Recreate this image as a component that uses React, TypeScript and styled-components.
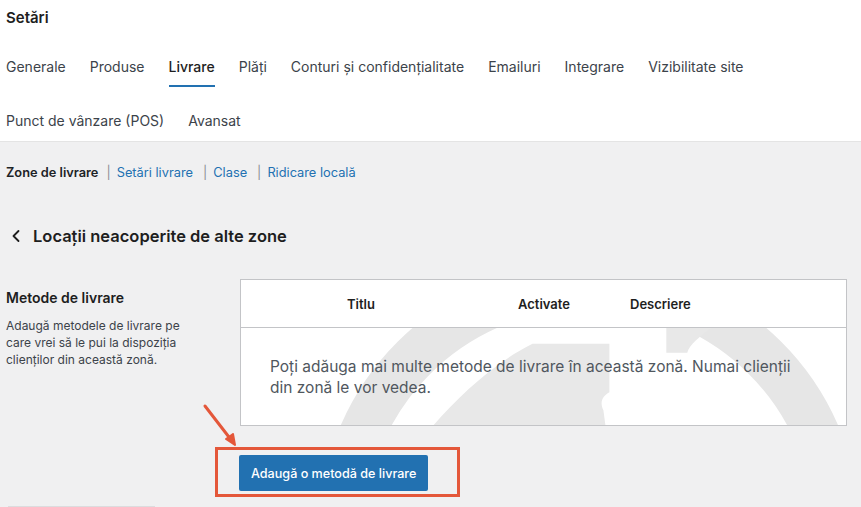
import styled, { createGlobalStyle } from 'styled-components';
import { ChevronLeft } from 'lucide-react';

const tabs = [
  'Generale',
  'Produse',
  'Livrare',
  'Plăți',
  'Conturi și confidențialitate',
  'Emailuri',
  'Integrare',
  'Vizibilitate site',
  'Punct de vânzare (POS)',
  'Avansat',
];

const subLinks = ['Setări livrare', 'Clase', 'Ridicare locală'];

const Globe = () =>
  <Watermark viewBox="241 327 606 98" preserveAspectRatio="none">
    <circle cx="590" cy="532" r="248" fill="none" stroke="#e6e6e6" strokeWidth="46" />
    <path
      d="M434 425 C460 395 495 362 533 343 L610 343 L610 392 C603 396 600 402 604 410 L606 425 Z"
      fill="#e8e8e8"
    />
    <path d="M667 327 L712 327 C700 336 690 344 688 352 L667 352 Z" fill="#e8e8e8" />
  </Watermark>;

const App: React.FC = () =>
  <Page>
    <GlobalStyle />
    <Header>
      <Title>Setări</Title>
      <TabList>
        {tabs.map(t =>
          <Tab key={t} $active={t === 'Livrare'}>{t}</Tab>
        )}
      </TabList>
    </Header>

    <Main>
      <SubNav>
        <Current>Zone de livrare</Current>
        {subLinks.map(l =>
          <SubItem key={l}>
            <Sep>|</Sep>
            <SubLink>{l}</SubLink>
          </SubItem>
        )}
      </SubNav>

      <BackHeading>
        <ChevronLeft size={20} strokeWidth={2.2} color="#1e1e1e" />
        <span>Locații neacoperite de alte zone</span>
      </BackHeading>

      <Section>
        <Intro>
          <IntroTitle>Metode de livrare</IntroTitle>
          <IntroText>
            Adaugă metodele de livrare pe care vrei să le pui la dispoziția clienților din această zonă.
          </IntroText>
        </Intro>

        <div>
          <Table>
            <HeadRow>
              <span />
              <HeadCell>Titlu</HeadCell>
              <HeadCell>Activate</HeadCell>
              <HeadCell>Descriere</HeadCell>
            </HeadRow>
            <Body>
              <Globe />
              <EmptyText>
                Poți adăuga mai multe metode de livrare în această zonă. Numai clienții din zonă le vor vedea.
              </EmptyText>
            </Body>
          </Table>

          <ActionRow>
            <Arrow width="40" height="48" viewBox="0 0 40 48">
              <line x1="3" y1="3" x2="30" y2="38" stroke="#e4573a" strokeWidth="3" strokeLinecap="round" />
              <path d="M24 36 L33 42 L31 31 Z" fill="#e4573a" stroke="#e4573a" strokeWidth="2" strokeLinejoin="round" />
            </Arrow>
            <Highlight>
              <Button>Adaugă o metodă de livrare</Button>
            </Highlight>
          </ActionRow>
        </div>
      </Section>

      <Divider />
    </Main>
  </Page>;


const GlobalStyle = createGlobalStyle`
  body {
    margin: 0;
    background: #f0f0f1;
    font-family: Inter, "Noto Sans", "Liberation Sans", sans-serif;
    color: #1e1e1e;
    -webkit-font-smoothing: antialiased;
  }
`;

const Page = styled.div`
  width: 861px;
  min-height: 507px;
  overflow: hidden;
`;

const Header = styled.header`
  background: #fff;
  padding: 8px 0 0 6px;
  border-bottom: 1px solid #e4e4e4;
`;

const Title = styled.h1`
  margin: 0;
  font-size: 15px;
  line-height: 20px;
  font-weight: 600;
  color: #1e1e1e;
`;

const TabList = styled.nav`
  display: flex;
  flex-wrap: wrap;
  column-gap: 24px;
  row-gap: 10px;
  margin-top: 15px;
`;

const Tab = styled.a<{ $active?: boolean }>`
  display: block;
  padding: 14px 0 8px;
  font-size: 14px;
  line-height: 20px;
  font-weight: ${p => (p.$active ? 500 : 400)};
  color: ${p => (p.$active ? '#1e1e1e' : '#3c434a')};
  border-bottom: 2px solid ${p => (p.$active ? '#2271b1' : 'transparent')};
`;

const Main = styled.main`
  padding: 22px 14px 0 6px;
`;

const SubNav = styled.div`
  display: flex;
  align-items: center;
  font-size: 12.8px;
  line-height: 18px;
`;

const Current = styled.span`
  font-weight: 600;
  color: #1d2327;
`;

const SubItem = styled.span`
  display: inline-flex;
  align-items: center;
`;

const Sep = styled.span`
  color: #8c8f94;
  margin: 0 6px 0 8px;
`;

const SubLink = styled.a`
  color: #2271b1;
  margin-right: 2px;
`;

const BackHeading = styled.h2`
  display: flex;
  align-items: center;
  gap: 7px;
  margin: 42px 0 0;
  font-size: 16.5px;
  line-height: 24px;
  font-weight: 600;
  color: #1e1e1e;
`;

const Section = styled.div`
  display: grid;
  grid-template-columns: 234px 1fr;
  margin-top: 31px;
`;

const Intro = styled.div`
  padding-top: 9px;
  padding-right: 50px;
`;

const IntroTitle = styled.h3`
  margin: 0;
  font-size: 14px;
  line-height: 20px;
  font-weight: 600;
  color: #1e1e1e;
`;

const IntroText = styled.p`
  margin: 9px 0 0;
  font-size: 12px;
  line-height: 17px;
  color: #3c434a;
`;

const Table = styled.div`
  background: #fff;
  border: 1px solid #c3c4c7;
`;

const HeadRow = styled.div`
  display: grid;
  grid-template-columns: 106px 171px 112px 1fr;
  align-items: center;
  height: 47px;
  border-bottom: 1px solid #c3c4c7;
`;

const HeadCell = styled.span`
  font-size: 13px;
  font-weight: 600;
  color: #1e1e1e;
`;

const Body = styled.div`
  position: relative;
  overflow: hidden;
  height: 97px;
  display: flex;
  align-items: center;
  padding: 0 29px;
`;

const Watermark = styled.svg`
  position: absolute;
  inset: 0;
  width: 100%;
  height: 100%;
`;

const EmptyText = styled.p`
  position: relative;
  margin: 0;
  font-size: 15.5px;
  line-height: 21px;
  color: #50575e;
`;

const ActionRow = styled.div`
  position: relative;
  margin-top: 21px;
`;

const Arrow = styled.svg`
  position: absolute;
  left: -38px;
  top: -44px;
`;

const Highlight = styled.div`
  display: inline-block;
  margin-left: -25px;
  padding: 5px 29px 3px 21px;
  border: 3.5px solid #e4573a;
`;

const Button = styled.button`
  display: block;
  height: 36px;
  padding: 0 12px;
  border: none;
  border-radius: 2px;
  background: #2271b1;
  color: #fff;
  font-family: inherit;
  font-size: 12.6px;
  font-weight: 500;
`;

const Divider = styled.div`
  width: 147px;
  margin: 9px 0 0 2px;
  border-top: 2px solid #dcdcde;
`;

export default App;
